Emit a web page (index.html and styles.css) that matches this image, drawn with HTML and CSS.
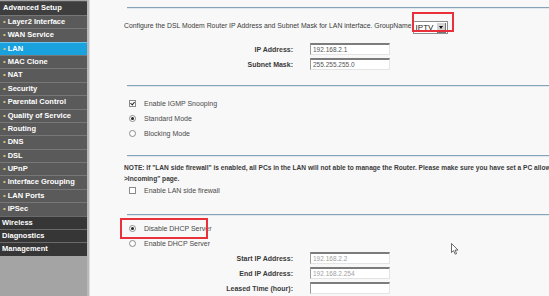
FILE: index.html
```html
<!DOCTYPE html>
<html>
<head>
    <link rel="stylesheet" href="styles.css">
</head>
<body>
<div class="page">
    <nav class="menu">
        <div class="menu-item head">Advanced Setup</div>
        <div class="menu-item sub">Layer2 Interface</div>
        <div class="menu-item sub">WAN Service</div>
        <div class="menu-item sub active">LAN</div>
        <div class="menu-item sub">MAC Clone</div>
        <div class="menu-item sub">NAT</div>
        <div class="menu-item sub">Security</div>
        <div class="menu-item sub">Parental Control</div>
        <div class="menu-item sub">Quality of Service</div>
        <div class="menu-item sub">Routing</div>
        <div class="menu-item sub">DNS</div>
        <div class="menu-item sub">DSL</div>
        <div class="menu-item sub">UPnP</div>
        <div class="menu-item sub">Interface Grouping</div>
        <div class="menu-item sub">LAN Ports</div>
        <div class="menu-item sub">IPSec</div>
        <div class="menu-item top">Wireless</div>
        <div class="menu-item top">Diagnostics</div>
        <div class="menu-item top">Management</div>
    </nav>

    <main class="content">
        <div class="rule"></div>
        <div class="intro">
            Configure the DSL Modem Router IP Address and Subnet Mask for LAN interface. GroupName<span class="picker">IPTV<span class="drop"></span></span><span class="mark mark-group"></span>
        </div>
        <div class="field first"><label>IP Address:</label><span class="box">192.168.2.1</span></div>
        <div class="field"><label>Subnet Mask:</label><span class="box">255.255.255.0</span></div>

        <div class="rule gap-igmp"></div>
        <div class="option first-igmp"><span class="tick on"></span>Enable IGMP Snooping</div>
        <div class="option"><span class="dot on"></span>Standard Mode</div>
        <div class="option"><span class="dot"></span>Blocking Mode</div>

        <div class="rule gap-note"></div>
        <div class="note">NOTE: If "LAN side firewall" is enabled, all PCs in the LAN will not able to manage the Router. Please make sure you have set a PC allowed to access the Router in "Advanced Setup-&gt;Security-<br>&gt;Incoming" page.</div>
        <div class="option short"><span class="tick"></span>Enable LAN side firewall</div>

        <div class="rule gap-dhcp"></div>
        <div class="option first-dhcp"><span class="dot on"></span>Disable DHCP Server<span class="mark mark-dhcp"></span></div>
        <div class="option"><span class="dot"></span>Enable DHCP Server</div>
        <div class="field dhcp"><label>Start IP Address:</label><span class="box off">192.168.2.2</span></div>
        <div class="field"><label>End IP Address:</label><span class="box off">192.168.2.254</span></div>
        <div class="field"><label>Leased Time (hour):</label><span class="box"></span></div>

        <svg class="cursor" width="8" height="12" viewBox="0 0 8 12">
            <path d="M0.5 0.5 L0.5 9.5 L2.6 7.6 L4.2 11.2 L5.6 10.6 L4.1 7.1 L7 7.1 Z" fill="#fff" stroke="#444" stroke-width="0.8"/>
        </svg>
    </main>
</div>
</body>
</html>
```

FILE: styles.css
```css
body {
    margin: 0;
    font-family: "Liberation Sans", Arial, sans-serif;
    background: #f8f8f8;
    color: #3a3a3a;
}
.page {
    display: flex;
    height: 296px;
    overflow: hidden;
}

/* left menu */
.menu {
    width: 87px;
    flex-shrink: 0;
    background: #a4a4a4;
    border-right: 2px solid #b9b9b9;
    box-shadow: 1px 0 0 #dcdcdc;
    padding-top: 1.4px;
}
.menu-item {
    height: 12.4px;
    line-height: 12.4px;
    border-top: 1px solid #777;
    color: white;
    font-size: 7.5px;
    font-weight: bold;
    padding-left: 3px;
    white-space: nowrap;
}
.head {
    background: #3e3e3e;
    border-top-color: #555;
}
.sub {
    background: #5a5a5a;
    padding-left: 3px;
}
.sub::before {
    content: "\2022";
    color: #d8ca74;
    margin-right: 2px;
}
.active {
    background: #1aa2de;
    border-top-color: #6cc4ea;
}
.top {
    background: #363636;
    border-top-color: #6a6a6a;
    padding-left: 2px;
}

/* main area */
.content {
    position: relative;
    flex: 1;
    padding: 7px 0 0 35px;
    font-size: 7px;
    white-space: nowrap;
}
.rule {
    margin-left: 3px;
    height: 0;
    border-top: 1px solid #86a4b7;
    border-bottom: 1px solid #e1e8ed;
}
.intro {
    position: relative;
    margin-top: 12px;
    height: 10px;
    line-height: 10px;
    font-size: 6.85px;
}
.picker {
    position: relative;
    display: inline-block;
    vertical-align: -2px;
    width: 31px;
    height: 11px;
    line-height: 11px;
    margin-left: 1px;
    padding-left: 2px;
    background: white;
    border: 1px solid #8c8c8c;
    font-size: 8px;
    color: #222;
}
.drop {
    position: absolute;
    right: 1px;
    top: 1px;
    width: 8px;
    height: 9px;
    background: #d4d4d4;
    border-right: 1px solid #777;
    border-bottom: 1px solid #777;
}
.drop::after {
    content: "";
    position: absolute;
    left: 2px;
    top: 3px;
    border-left: 2px solid transparent;
    border-right: 2px solid transparent;
    border-top: 3px solid #111;
}
.mark {
    position: absolute;
    border: 2px solid #e8313b;
}
.mark-group {
    left: 288px;
    top: -9px;
    width: 38px;
    height: 16px;
}
.mark-dhcp {
    left: -4px;
    top: -3.5px;
    width: 84px;
    height: 17px;
}

.field {
    display: flex;
    align-items: center;
    height: 15px;
}
.field.first {
    margin-top: 10.5px;
}
.field.dhcp {
    margin-top: -0.5px;
}
.field label {
    width: 169px;
    margin-right: 17px;
    text-align: right;
    font-weight: bold;
}
.box {
    width: 76px;
    height: 9px;
    line-height: 9px;
    padding-left: 2px;
    background: white;
    border-top: 2px solid #7c7c7c;
    border-left: 1px solid #9a9a9a;
    border-right: 1px solid #e4e4e4;
    border-bottom: 1px solid #e4e4e4;
    color: #555;
    font-size: 6.5px;
}
.box.off {
    color: #a0a0a0;
}

.gap-igmp {
    margin-top: 13.5px;
}
.gap-note {
    margin-top: 14.5px;
}
.gap-dhcp {
    margin-top: 16px;
}
.option {
    position: relative;
    display: flex;
    align-items: center;
    height: 15px;
    padding-left: 5px;
    color: #4a4a4a;
}
.option.first-igmp {
    margin-top: 8.5px;
}
.option.first-dhcp {
    margin-top: 5.5px;
}
.option.short {
    height: 14px;
}
.tick, .dot {
    position: relative;
    width: 5px;
    height: 5px;
    margin-right: 8px;
    background: white;
    border: 1px solid #8a8a8a;
}
.dot {
    border-radius: 50%;
}
.tick.on::after {
    content: "";
    position: absolute;
    left: 1px;
    top: 0;
    width: 2px;
    height: 3px;
    border-right: 1px solid #222;
    border-bottom: 1px solid #222;
    transform: rotate(40deg);
}
.dot.on::after {
    content: "";
    position: absolute;
    left: 1px;
    top: 1px;
    width: 3px;
    height: 3px;
    border-radius: 50%;
    background: #222;
}
.note {
    margin-top: 4.5px;
    line-height: 11px;
    font-size: 6.6px;
    font-weight: bold;
}

.cursor {
    position: absolute;
    left: 362px;
    top: 243px;
}
```
